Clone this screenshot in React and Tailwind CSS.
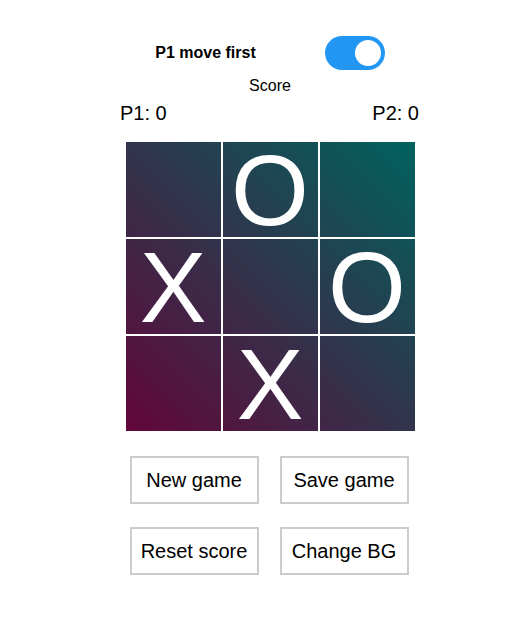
import { useState } from "react";

const cells = ["", "O", "", "X", "", "O", "", "X", ""];

export default function App() {
  const [p1First, setP1First] = useState(true);

  return (
    <div className="min-h-screen bg-white font-['Liberation_Sans',Arial,sans-serif] text-black">
      <div className="flex justify-center pl-[14px] pt-[36px]">
        <div className="flex w-[300px] flex-col items-center">
          <div className="flex h-[34px] items-center gap-[69px]">
            <span className="text-[16px] font-bold">P1 move first</span>
            <button
              onClick={() => setP1First(!p1First)}
              className={`relative h-[34px] w-[60px] rounded-full ${p1First ? "bg-[#2196f3]" : "bg-[#ccc]"}`}
            >
              <span
                className={`absolute top-[4px] h-[26px] w-[26px] rounded-full bg-white ${p1First ? "left-[30px]" : "left-[4px]"}`}
              />
            </button>
          </div>
          <p className="mt-[6px] text-[16px] leading-[20px]">Score</p>
          <div className="mt-[5px] flex w-full justify-between pr-[1px] text-[20px] leading-[24px]">
            <span>P1: 0</span>
            <span>P2: 0</span>
          </div>
          <div className="mt-[17px] grid w-[289px] grid-cols-3 gap-[2px] bg-[linear-gradient(to_top_right,#62063a,#00625e)]">
            {cells.map((c, i) => (
              <div
                key={i}
                className="flex h-[95px] items-center justify-center text-[100px] leading-none text-white outline outline-2 outline-white"
              >
                {c}
              </div>
            ))}
          </div>
          <div className="mt-[25px] mr-[2px] grid grid-cols-2 gap-x-[21px] gap-y-[23px]">
            {["New game", "Save game", "Reset score", "Change BG"].map((b) => (
              <button
                key={b}
                className="h-[48px] w-[129px] border-2 border-[#ccc] bg-white text-[20px]"
              >
                {b}
              </button>
            ))}
          </div>
        </div>
      </div>
    </div>
  );
}
